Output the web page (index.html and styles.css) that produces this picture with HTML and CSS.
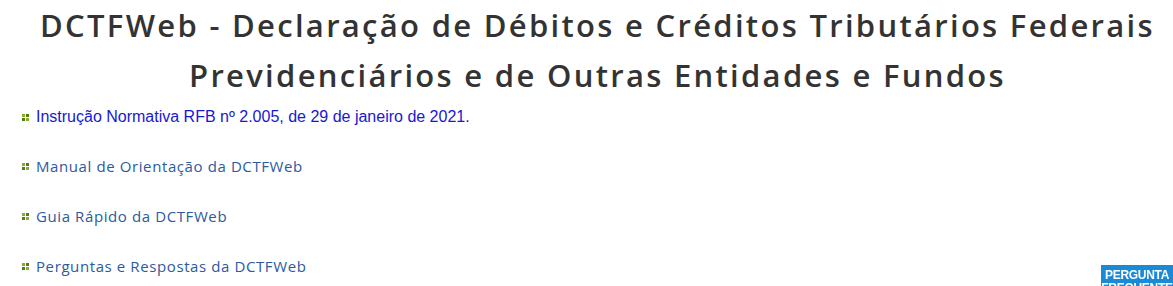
FILE: index.html
```
<!DOCTYPE html>
<html lang="pt-BR">
<head>
<meta charset="utf-8">
<title>DCTFWeb</title>
<link rel="stylesheet" href="styles.css">
</head>
<body>
<div class="page">
  <h1 class="title">DCTFWeb - Declaração de Débitos e Créditos Tributários Federais Previdenciários e de Outras Entidades e Fundos</h1>
  <ul class="links">
    <li class="item"><span class="bullet"><i></i><i></i><i></i><i></i></span><a class="link link-arial" href="#">Instrução Normativa RFB nº 2.005, de 29 de janeiro de 2021.</a></li>
    <li class="item"><span class="bullet"><i></i><i></i><i></i><i></i></span><a class="link" href="#">Manual de Orientação da DCTFWeb</a></li>
    <li class="item"><span class="bullet"><i></i><i></i><i></i><i></i></span><a class="link" href="#">Guia Rápido da DCTFWeb</a></li>
    <li class="item"><span class="bullet"><i></i><i></i><i></i><i></i></span><a class="link" href="#">Perguntas e Respostas da DCTFWeb</a></li>
  </ul>
</div>
<div class="badge"><span>PERGUNTA</span><span>FREQUENTE</span></div>
</body>
</html>
```
FILE: styles.css
```
html, body {
  margin: 0;
  padding: 0;
  background: #ffffff;
}
body {
  font-family: "Open Sans", "Liberation Sans", sans-serif;
  overflow: hidden;
}
.page {
  padding: 0 0 0 22px;
}
.title {
  margin: 0;
  text-align: center;
  font-family: "Open Sans", sans-serif;
  font-weight: 600;
  font-size: 31px;
  line-height: 50px;
  letter-spacing: 2.3px;
  color: #333333;
}
.links {
  list-style: none;
  margin: 0;
  padding: 0;
}
.item {
  display: flex;
  align-items: center;
  gap: 7px;
  height: 50px;
}
.item:first-child {
  height: 48px;
  margin-top: -7px;
}
.bullet {
  display: grid;
  grid-template-columns: 3px 3px;
  grid-template-rows: 3px 3px;
  gap: 1px;
}
.bullet i {
  display: block;
  background: #4f7d18;
}
.bullet i:nth-child(1), .bullet i:nth-child(4) {
  background: #8caa2c;
}
.link {
  font-size: 15px;
  letter-spacing: 0.6px;
  color: #2c5aa0;
  text-decoration: none;
}
.link-arial {
  font-family: "Liberation Sans", Arial, sans-serif;
  font-size: 16px;
  letter-spacing: 0;
  color: #1818d2;
}
.badge {
  position: fixed;
  left: 1101px;
  top: 265px;
  width: 72px;
  height: 40px;
  background: #1a8ad6;
  color: #ffffff;
  font-family: "Liberation Sans", Arial, sans-serif;
  font-weight: 700;
  font-size: 12px;
  line-height: 13px;
  display: flex;
  flex-direction: column;
  align-items: center;
  padding-top: 4px;
  letter-spacing: -0.3px;
}
```
